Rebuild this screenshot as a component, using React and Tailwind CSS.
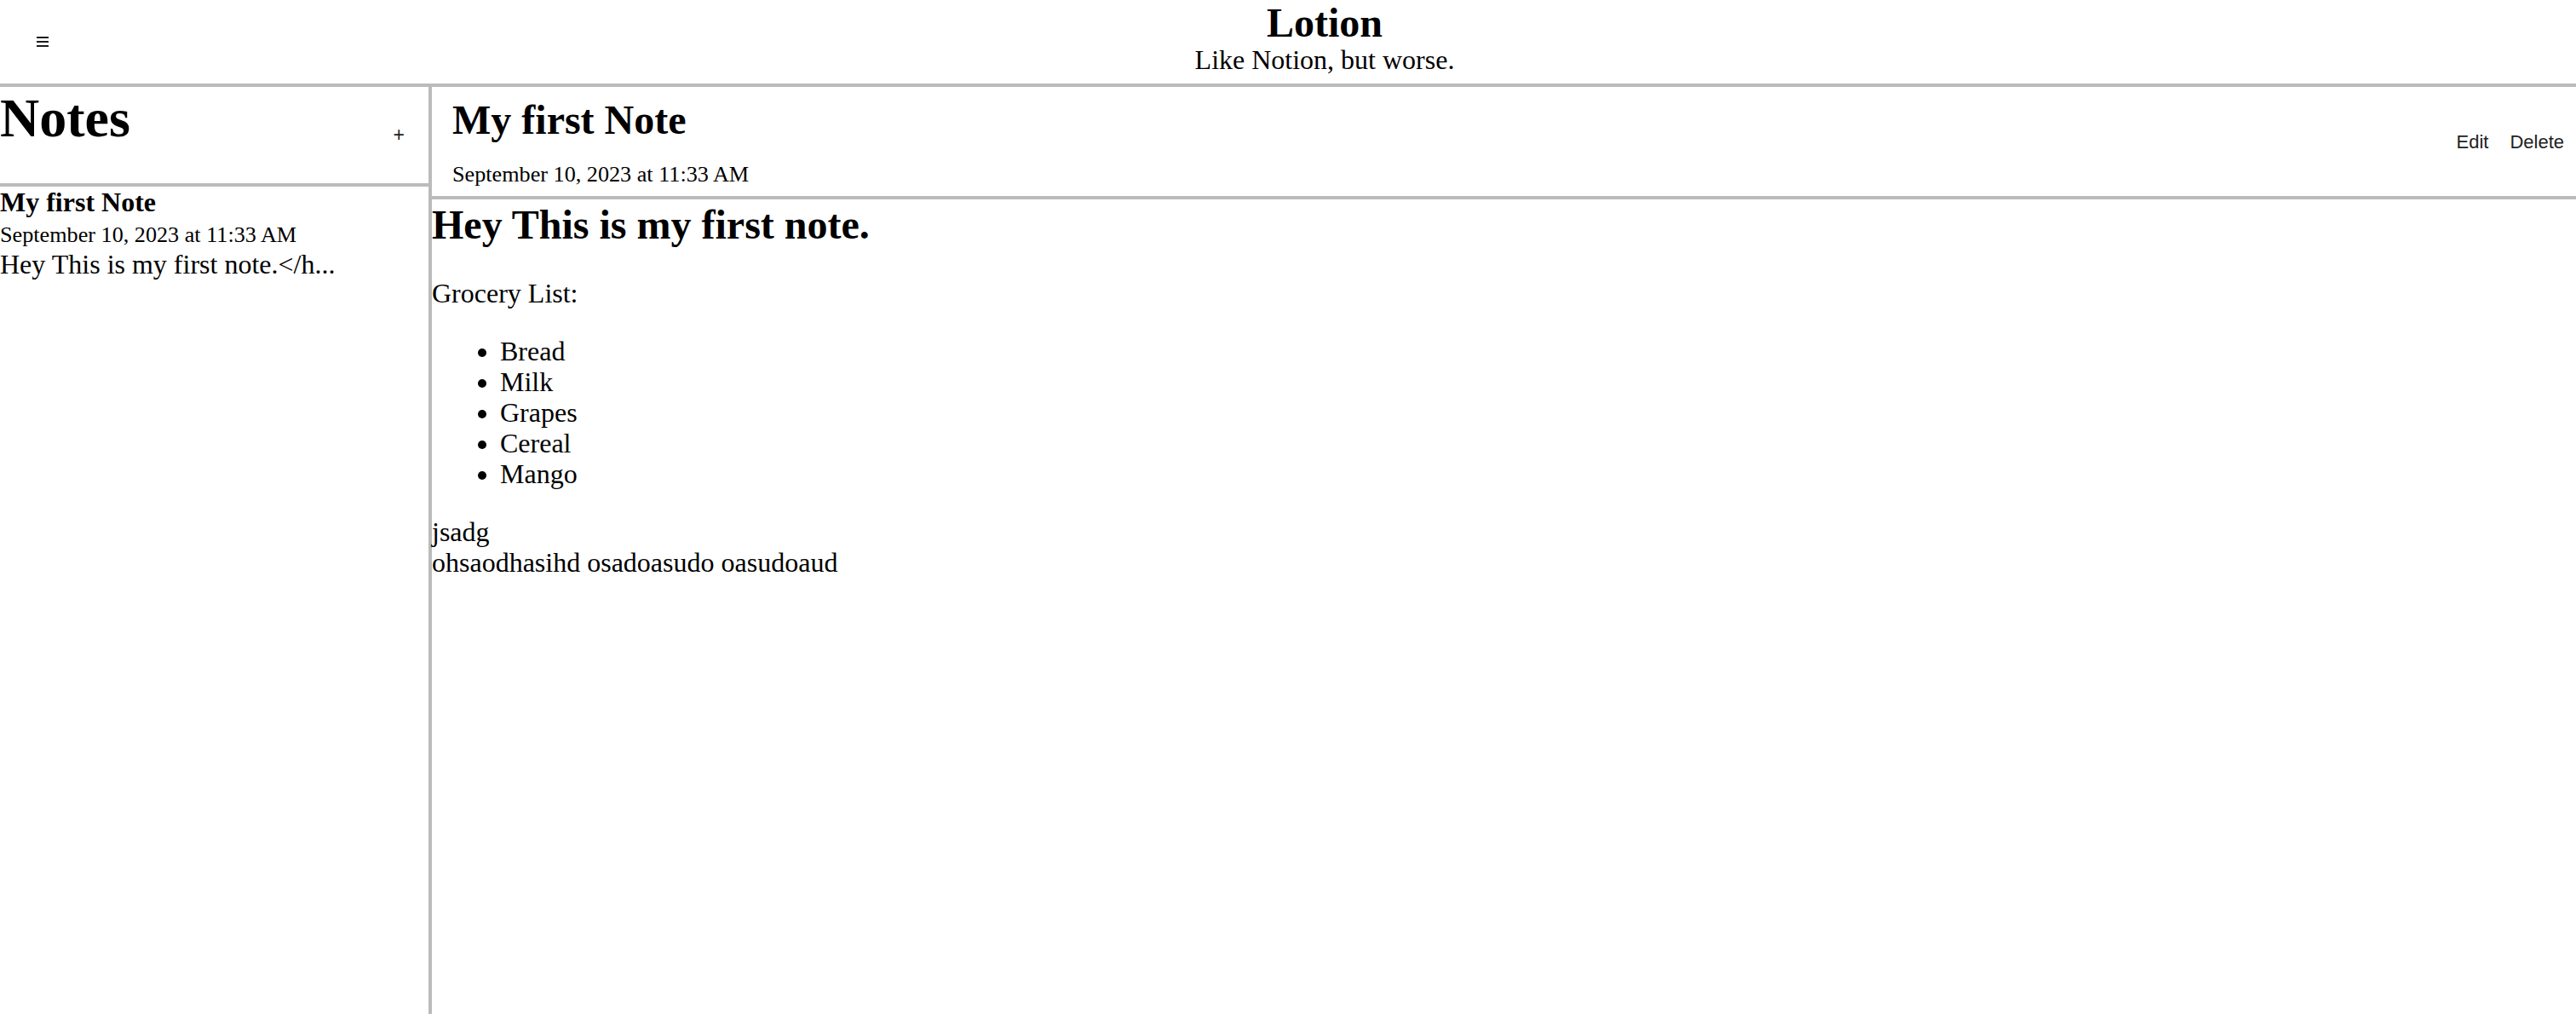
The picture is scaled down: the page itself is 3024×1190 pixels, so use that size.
import React, { useState } from 'react';

const note = {
  title: 'My first Note',
  date: 'September 10, 2023 at 11:33 AM',
  preview: 'Hey This is my first note.</h...',
};

const groceries = ['Bread', 'Milk', 'Grapes', 'Cereal', 'Mango'];

const App = () => {
  const [menuOpen, setMenuOpen] = useState(true);

  return (
    <div className="min-h-screen flex flex-col bg-white text-black font-['Liberation_Serif',serif]">
      <header className="h-[102px] shrink-0 flex border-b-4 border-[#bbbbbb]">
        <div className="w-[86px] flex items-center justify-center pl-[14px]">
          <button onClick={() => setMenuOpen(!menuOpen)} className="text-[#1c1c1c]">
            <svg width="14" height="12" viewBox="0 0 14 12" fill="currentColor">
              <rect x="0" y="0" width="14" height="2" />
              <rect x="0" y="5" width="14" height="2" />
              <rect x="0" y="10" width="14" height="2" />
            </svg>
          </button>
        </div>
        <div className="flex-1 flex flex-col items-center">
          <h1 className="text-[48px] font-bold leading-[54px]">Lotion</h1>
          <p className="text-[32px] leading-[32px]">Like Notion, but worse.</p>
        </div>
      </header>

      <div className="flex flex-1">
        {menuOpen && (
          <aside className="w-[507px] shrink-0 border-r-4 border-[#bbbbbb]">
            <div className="h-[117px] flex justify-between items-center border-b-4 border-[#bbbbbb]">
              <h1 className="self-start text-[64px] font-bold leading-[74px]">Notes</h1>
              <button className="mr-[28px] text-[23px] text-[#1c1c1c] font-['Liberation_Sans',sans-serif]">
                +
              </button>
            </div>
            <div>
              <h3 className="text-[32px] font-bold leading-[37px]">{note.title}</h3>
              <div className="text-[32px] leading-[35px]">
                <small className="text-[26.2px]">{note.date}</small>
              </div>
              <p className="text-[32px] leading-[34px]">{note.preview}</p>
            </div>
          </aside>
        )}

        <main className="flex-1 flex flex-col">
          <div className="h-[132px] flex justify-between items-center border-b-4 border-[#bbbbbb]">
            <div className="self-start pl-[24px] pt-[11px]">
              <h2 className="text-[48px] font-bold leading-[55px]">{note.title}</h2>
              <p className="mt-[21px] text-[26.2px] leading-[31px]">{note.date}</p>
            </div>
            <div className="flex gap-[25px] pr-[14px] text-[22px] text-[#222222] font-['Liberation_Sans',sans-serif]">
              <button>Edit</button>
              <button>Delete</button>
            </div>
          </div>

          <div className="pt-[2px] text-[32px] leading-[36px]">
            <h2 className="text-[48px] font-bold leading-[56px]">Hey This is my first note.</h2>
            <p className="mt-[34px]">Grocery List:</p>
            <ul className="mt-[32px] pl-[80px] list-disc">
              {groceries.map((item) => (
                <li key={item}>{item}</li>
              ))}
            </ul>
            <p className="mt-[32px]">jsadg</p>
            <p>ohsaodhasihd osadoasudo oasudoaud</p>
          </div>
        </main>
      </div>
    </div>
  );
};

export default App;
